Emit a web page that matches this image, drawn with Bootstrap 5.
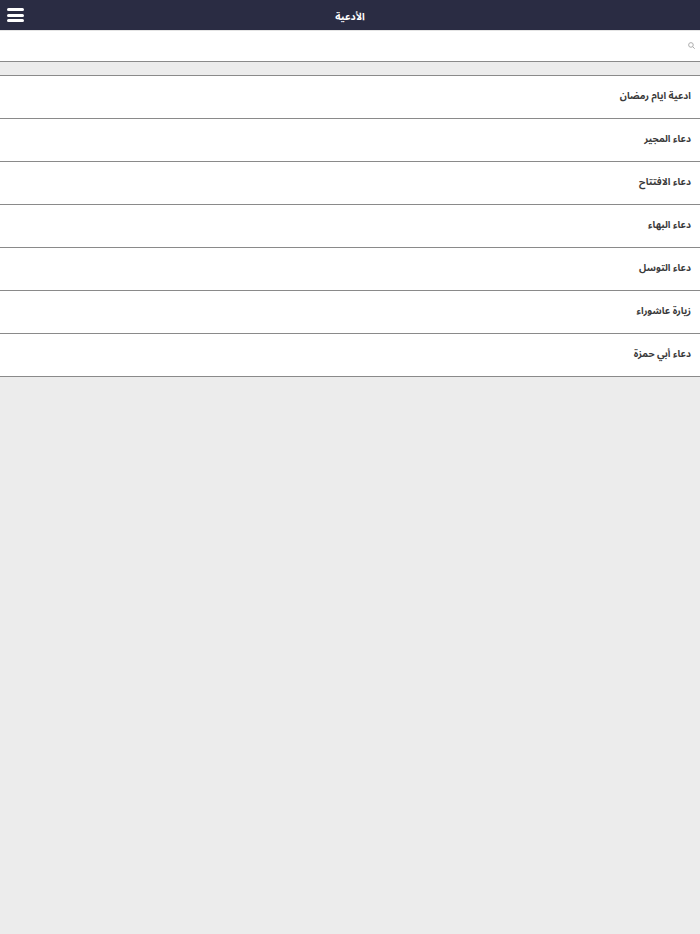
<!DOCTYPE html>
<html lang="ar" dir="rtl">
<head>
<meta charset="utf-8">
<title>الأدعية</title>
<link rel="stylesheet" href="https://cdn.jsdelivr.net/npm/bootstrap@5.3.0/dist/css/bootstrap.min.css">
<style>
html,body{height:100%}
body{background:#ececec;font-family:"Noto Sans Arabic",sans-serif;font-weight:700;font-size:9.7px;color:#3a3a3a}
.app-bar{height:30px;background:#2a2c43;color:#fff;font-size:10px;padding-top:2px}
.app-burger{left:7px;top:8px;width:17px;height:14px}
.app-burger span{height:3px;background:#fff;border-radius:1.5px}
.search-row{height:32px;background:#fff;border-top:1px solid #e4e4e4;border-bottom:1px solid #8a8a8a;padding:0 5px 2px}
.gap-row{height:14px;border-bottom:1px solid #8a8a8a}
.prayer-list{--bs-list-group-bg:#fff;--bs-list-group-color:#3a3a3a;--bs-list-group-border-color:#8a8a8a;--bs-list-group-border-radius:0}
.prayer-list .list-group-item{height:43px;padding:13px 9px 0;border-width:0 0 1px;line-height:14px}
</style>
</head>
<body>
<header class="app-bar position-relative d-flex align-items-center justify-content-center">
<span>الأدعية</span>
<div class="app-burger position-absolute d-flex flex-column justify-content-between"><span></span><span></span><span></span></div>
</header>
<div class="search-row d-flex align-items-center">
<svg width="7" height="7" viewBox="0 0 10 10" fill="none" stroke="#aaa" stroke-width="1.4"><circle cx="4.2" cy="4.2" r="3.3"/><path d="M6.6 6.6 9.6 9.6"/></svg>
</div>
<div class="gap-row"></div>
<div class="list-group prayer-list">
<a class="list-group-item">ادعية ايام رمضان</a>
<a class="list-group-item">دعاء المجير</a>
<a class="list-group-item">دعاء الافتتاح</a>
<a class="list-group-item">دعاء البهاء</a>
<a class="list-group-item">دعاء التوسل</a>
<a class="list-group-item">زيارة عاشوراء</a>
<a class="list-group-item">دعاء أبي حمزة</a>
</div>
<script src="https://cdn.jsdelivr.net/npm/bootstrap@5.3.0/dist/js/bootstrap.bundle.min.js"></script>
</body>
</html>
